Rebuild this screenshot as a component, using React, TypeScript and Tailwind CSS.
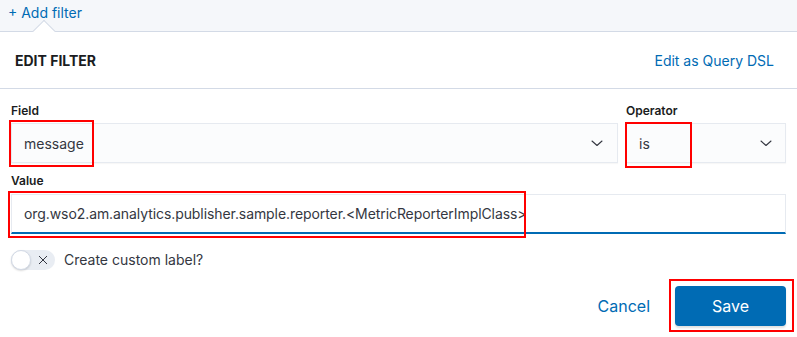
export default function App() {
  const chevron = (
    <svg className="w-[16px] h-[16px] text-[#343741]" viewBox="0 0 16 16" fill="none">
      <path d="M3 6l5 4.5L13 6" stroke="currentColor" strokeWidth={1.1} strokeLinecap="round" strokeLinejoin="round" />
    </svg>
  );

  return (
    <div className="relative w-[797px] h-[337px] overflow-hidden bg-white font-['Inter',sans-serif]">
      {/* Filter bar */}
      <div className="relative h-[32px] bg-[#f5f7fa] border-b border-[#d3dae6] px-[8px]">
        <span className="text-[14px] leading-[18px] text-[#006bb4]">+ Add filter</span>
        <div className="absolute left-[36px] top-[23px] w-[16px] h-[16px] rotate-45 bg-white border-l border-t border-[#d3dae6]" />
      </div>

      {/* Header */}
      <div className="flex items-center justify-between h-[57px] pl-[15px] pr-[23px] border-b border-[#d3dae6]">
        <span className="text-[14px] font-bold text-[#1a1c21]">EDIT FILTER</span>
        <span className="text-[14px] text-[#006bb4]">Edit as Query DSL</span>
      </div>

      {/* Body */}
      <div className="px-[11px] pt-[13px]">
        <div className="flex gap-[8px]">
          <div className="flex-1">
            <div className="text-[12px] font-semibold leading-[18px] mb-[3px] text-[#1a1c21]">Field</div>
            <div className="flex items-center justify-between h-[40px] pl-[12px] pr-[12px] bg-[#fbfcfd] border border-[#e6eaf0] shadow-[0_1px_1px_rgba(0,0,0,0.03)]">
              <span className="text-[14px] text-[#343741]">message</span>
              {chevron}
            </div>
          </div>
          <div className="w-[160px]">
            <div className="text-[12px] font-semibold leading-[18px] mb-[3px] text-[#1a1c21]">Operator</div>
            <div className="flex items-center justify-between h-[40px] pl-[12px] pr-[11px] bg-[#fbfcfd] border border-[#e6eaf0] shadow-[0_1px_1px_rgba(0,0,0,0.03)]">
              <span className="text-[14px] text-[#343741]">is</span>
              {chevron}
            </div>
          </div>
        </div>

        <div className="mt-[9px]">
          <div className="text-[12px] font-semibold leading-[18px] mb-[4px] text-[#1a1c21]">Value</div>
          <div className="flex items-center h-[40px] pl-[12px] bg-white border border-[#e6eaf0] border-b-2 border-b-[#006bb4]">
            <span className="text-[14px] tracking-[-0.08px] text-[#343741]">
              org.wso2.am.analytics.publisher.sample.reporter.&lt;MetricReporterImplClass&gt;
            </span>
          </div>
        </div>

        <div className="flex items-center gap-[9px] mt-[15px]">
          <div className="relative w-[44px] h-[20px] rounded-full bg-[#e9edf3]">
            <div className="absolute left-0 top-0 w-[20px] h-[20px] rounded-full bg-white border border-[#d3dae6] shadow-[0_1px_2px_rgba(0,0,0,0.15)]" />
            <svg className="absolute left-[27px] top-[5px] w-[10px] h-[10px] text-[#343741]" viewBox="0 0 10 10">
              <path d="M1 1l8 8M9 1l-8 8" stroke="currentColor" strokeWidth={1} />
            </svg>
          </div>
          <span className="text-[14px] text-[#343741]">Create custom label?</span>
        </div>

        <div className="flex justify-end items-center gap-[25px] mt-[16px]">
          <span className="text-[16px] text-[#006bb4]">Cancel</span>
          <div className="flex items-center justify-center w-[111px] h-[40px] rounded-[4px] bg-[#006bb4] shadow-[0_2px_2px_rgba(0,0,0,0.12)]">
            <span className="text-[16px] text-white">Save</span>
          </div>
        </div>
      </div>

      {/* Annotation boxes */}
      <div className="absolute left-[9px] top-[120px] w-[85px] h-[47px] border-2 border-[#f00]" />
      <div className="absolute left-[625px] top-[122px] w-[67px] h-[46px] border-2 border-[#f00]" />
      <div className="absolute left-[8px] top-[191px] w-[518px] h-[47px] border-2 border-[#f00]" />
      <div className="absolute left-[669px] top-[279px] w-[125px] h-[53px] border-2 border-[#f00]" />
    </div>
  );
}
